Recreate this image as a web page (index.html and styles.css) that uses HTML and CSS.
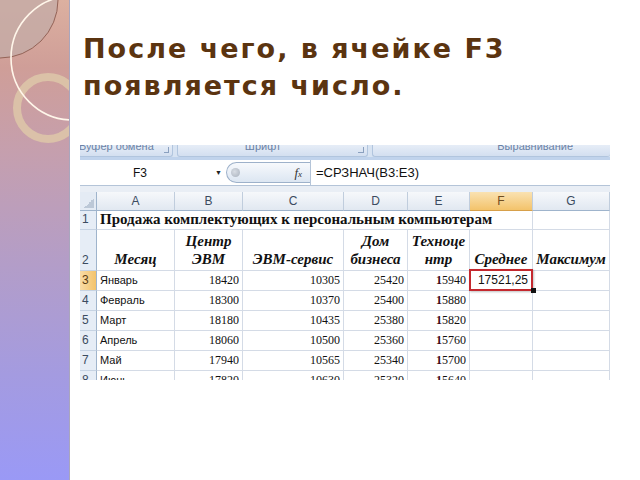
FILE: index.html
```html
<!DOCTYPE html>
<html lang="ru">
<head>
<meta charset="utf-8">
<link rel="stylesheet" href="styles.css">
</head>
<body>
<div class="slide">
  <aside class="side">
    <svg class="deco" width="69" height="480" viewBox="0 0 69 480">
      <circle cx="0" cy="0" r="58" fill="#c4aba6" fill-opacity="0.8" stroke="#946357" stroke-width="1"/>
      <circle cx="48" cy="108" r="31" fill="none" stroke="#ddc4a8" stroke-width="8" stroke-opacity="0.9"/>
      <circle cx="73" cy="58" r="62" fill="none" stroke="#fff6ea" stroke-width="1.6"/>
    </svg>
  </aside>
  <main class="content">
    <h1 class="title">После чего, в ячейке F3<br>появляется число.</h1>
    <div class="sheet">
      <div class="ribbon">
        <div class="grp g1"><span class="glabel">Буфер обмена</span><i class="launch"></i></div>
        <div class="grp g2"><span class="glabel">Шрифт</span><i class="launch"></i></div>
        <div class="grp g3"><span class="glabel">Выравнивание</span></div>
      </div>
      <div class="fbar">
        <div class="namebox"><span class="nb-text">F3</span><span class="nb-arrow">▼</span></div>
        <div class="fxbtn"><span class="knob"></span><span class="fx">f<span class="fxx">x</span></span></div>
        <div class="formula">=СРЗНАЧ(B3:E3)</div>
      </div>
      <div class="gap"></div>
      <div class="grid">
        <div class="corner"><span class="tri"></span></div>
        <div class="ch">A</div><div class="ch">B</div><div class="ch">C</div><div class="ch">D</div><div class="ch">E</div><div class="ch sel">F</div><div class="ch">G</div>

        <div class="rh">1</div>
        <div class="c title1">Продажа комплектующих к персональным компьютерам</div>
        <div class="c"></div>

        <div class="rh">2</div>
        <div class="c hd">Месяц</div>
        <div class="c hd">Центр<br>ЭВМ</div>
        <div class="c hd">ЭВМ-сервис</div>
        <div class="c hd">Дом<br>бизнеса</div>
        <div class="c hd">Техноце<br>нтр</div>
        <div class="c hd">Среднее</div>
        <div class="c hd">Максимум</div>

        <div class="rh sel">3</div>
        <div class="c t">Январь</div><div class="c n">18420</div><div class="c n">10305</div><div class="c n">25420</div><div class="c n"><span class="d1">1</span>5940</div>
        <div class="c v hl">17521,25</div><div class="c"></div>

        <div class="rh">4</div>
        <div class="c t">Февраль</div><div class="c n">18300</div><div class="c n">10370</div><div class="c n">25400</div><div class="c n"><span class="d1">1</span>5880</div><div class="c"></div><div class="c"></div>

        <div class="rh">5</div>
        <div class="c t">Март</div><div class="c n">18180</div><div class="c n">10435</div><div class="c n">25380</div><div class="c n"><span class="d1">1</span>5820</div><div class="c"></div><div class="c"></div>

        <div class="rh">6</div>
        <div class="c t">Апрель</div><div class="c n">18060</div><div class="c n">10500</div><div class="c n">25360</div><div class="c n"><span class="d1">1</span>5760</div><div class="c"></div><div class="c"></div>

        <div class="rh">7</div>
        <div class="c t">Май</div><div class="c n">17940</div><div class="c n">10565</div><div class="c n">25340</div><div class="c n"><span class="d1">1</span>5700</div><div class="c"></div><div class="c"></div>

        <div class="rh">8</div>
        <div class="c t">Июнь</div><div class="c n">17820</div><div class="c n">10630</div><div class="c n">25320</div><div class="c n"><span class="d1">1</span>5640</div><div class="c"></div><div class="c"></div>
      </div>
    </div>
  </main>
</div>
</body>
</html>
```

FILE: styles.css
```css
* { box-sizing: border-box; }
html, body { margin: 0; padding: 0; background: #fff; }

.slide {
  display: flex;
  width: 640px;
  height: 480px;
  overflow: hidden;
  background: #fff;
}

.side {
  flex: none;
  width: 70px;
  height: 480px;
  border-right: 1px solid #a9a6bd;
  background: linear-gradient(180deg, #dcb0a0 0%, #cf9e98 14%, #c59fae 32%, #b39dc8 55%, #a49be0 78%, #9a99f6 100%);
}
.deco { display: block; }

.content {
  flex: 1;
  padding: 30px 0 0 10px;
}

.title {
  margin: 0 0 41px 3px;
  font: 700 27px/37px "DejaVu Sans", sans-serif;
  letter-spacing: 2px;
  color: #5b3410;
}

.sheet {
  width: 530px;
  height: 235px;
  overflow: hidden;
  font-family: "Liberation Sans", Arial, sans-serif;
}

/* ribbon group captions */
.ribbon {
  height: 15px;
  display: flex;
  gap: 4px;
  background: #d7e3f2;
  border-bottom: 3px solid #c0d3ec;
  overflow: hidden;
}
.grp {
  height: 12px;
  display: flex;
  align-items: flex-start;
  background: linear-gradient(#e6edf7, #d3dff0);
  border: 1px solid #b1c5de;
  border-top: none;
  border-radius: 0 0 3px 3px;
  overflow: hidden;
}
.g1 { width: 95px; margin-left: -2px; justify-content: flex-end; padding-right: 3px; }
.g2 { width: 191px; justify-content: flex-end; padding-right: 3px; }
.g3 { flex: 1; justify-content: flex-end; padding-right: 37px; border-right: none; }
.glabel {
  font: 11px/12px "Liberation Sans", Arial, sans-serif;
  color: #6a82a6;
  margin-top: -5px;
  white-space: nowrap;
}
.g2 .glabel { margin-right: 67px; }
.launch {
  width: 6px;
  height: 6px;
  margin: 2px 0 0 10px;
  border-right: 1px solid #8aa0bf;
  border-bottom: 1px solid #8aa0bf;
}

/* formula bar */
.fbar {
  height: 26px;
  display: flex;
  background: #fff;
  border-bottom: 1px solid #b4c4d8;
}
.namebox {
  width: 146px;
  display: flex;
  align-items: center;
  padding-right: 4px;
  font-size: 12px;
  color: #111;
}
.nb-text { width: 120px; text-align: center; }
.nb-arrow { margin-left: auto; font-size: 7px; color: #222; }
.fxbtn {
  width: 84px;
  height: 21px;
  margin-top: 2px;
  display: flex;
  align-items: center;
  border: 1px solid #9db1ca;
  border-right: none;
  border-radius: 11px 0 0 11px;
  background: linear-gradient(#f7f9fc, #dce6f2);
  padding: 0 8px 0 4px;
}
.knob {
  width: 9px;
  height: 9px;
  border-radius: 50%;
  background: radial-gradient(circle at 40% 40%, #d8dde4, #a7b0bc);
}
.fx {
  margin-left: auto;
  font: italic 13px "Liberation Serif", serif;
  color: #333;
}
.fxx { font-size: 9px; }
.formula {
  flex: 1;
  border-left: 1px solid #b4c4d8;
  padding-left: 5px;
  font: 13px/25px "Liberation Sans", Arial, sans-serif;
  color: #111;
}
.gap {
  height: 6px;
  background: #e9eef5;
}

/* worksheet grid */
.grid {
  display: grid;
  grid-template-columns: 17px 78px 68px 101px 64px 62px 63px 77px;
  grid-template-rows: 19px 19px 41px repeat(6, 20px);
  background: #fff;
}
.corner {
  display: flex;
  align-items: flex-end;
  justify-content: flex-end;
  padding: 0 2px 2px 0;
  background: #e4ebf4;
  border-right: 1px solid #9fb4cc;
  border-bottom: 1px solid #9fb4cc;
}
.tri {
  width: 10px;
  height: 10px;
  background: linear-gradient(to bottom right, transparent 50%, #bcc8d7 50%);
}
.ch {
  display: flex;
  align-items: center;
  justify-content: center;
  background: linear-gradient(#f6f8fb, #e1e8f1);
  border-right: 1px solid #c0cddd;
  border-bottom: 1px solid #9fb4cc;
  font-size: 12px;
  color: #3b4b60;
}
.ch.sel {
  background: linear-gradient(#fae2b2, #f3c36b);
  border-bottom-color: #d7a04a;
  color: #6f4d1f;
}
.rh {
  display: flex;
  align-items: flex-end;
  padding: 0 0 2px 2px;
  background: #e6edf6;
  border-right: 1px solid #9fb4cc;
  border-bottom: 1px solid #c6d3e3;
  font-size: 12px;
  line-height: 15px;
  color: #3b4b60;
}
.rh.sel { background: linear-gradient(90deg, #f9dca6, #f3c36b); color: #5a3d14; }

.c {
  border-right: 1px solid #d4dbe6;
  border-bottom: 1px solid #d4dbe6;
  white-space: nowrap;
  display: flex;
  align-items: flex-end;
  padding-bottom: 2px;
  color: #111;
}
.title1 {
  grid-column: span 6;
  padding-left: 3px;
  font: 700 15px/16px "Liberation Serif", serif;
}
.hd {
  flex-direction: column;
  justify-content: flex-end;
  align-items: center;
  text-align: center;
  font: italic 700 15px/18px "Liberation Serif", serif;
}
.t {
  padding-left: 3px;
  font-size: 11px;
  line-height: 15px;
}
.n {
  justify-content: flex-end;
  padding-right: 3px;
  font: 12px/15px "Liberation Serif", serif;
}
.d1 { color: #3d0a18; font-weight: 700; }
.v {
  justify-content: flex-end;
  padding-right: 4px;
  font-size: 12px;
  line-height: 15px;
}
.hl { position: relative; }
.hl::after {
  content: "";
  position: absolute;
  left: -1px;
  top: -2px;
  right: -1px;
  bottom: -1px;
  border: 2.5px solid #c4282e;
  box-shadow: 1px 1px 2px rgba(0,0,0,0.25);
}
.hl::before {
  content: "";
  position: absolute;
  right: -4px;
  bottom: -3px;
  width: 5px;
  height: 5px;
  background: #111;
  z-index: 1;
}
```
